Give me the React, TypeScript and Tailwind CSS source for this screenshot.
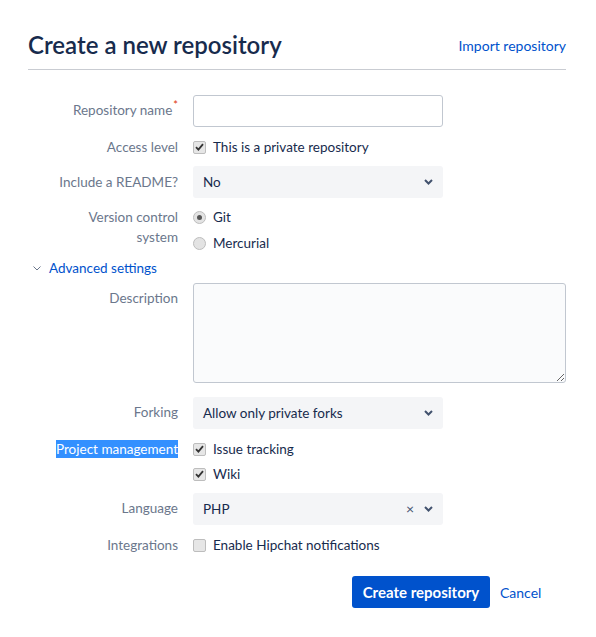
import React from "react";

const FONT = "font-['Lato','Liberation_Sans',sans-serif]";

function Check({ checked }: { checked: boolean }) {
  return (
    <span className="flex h-[13px] w-[13px] shrink-0 items-center justify-center rounded-[2px] border border-[#bdbdbd] bg-[#e6e6e6]">
      {checked && (
        <svg width="9" height="8" viewBox="0 0 9 8">
          <path d="M1 4.2 L3.4 6.6 L8 1.2" fill="none" stroke="#333" strokeWidth="1.8" />
        </svg>
      )}
    </span>
  );
}

function Radio({ checked }: { checked: boolean }) {
  return (
    <span className="flex h-[13px] w-[13px] shrink-0 items-center justify-center rounded-full border border-[#bdbdbd] bg-[#e3e3e3]">
      {checked && <span className="h-[5px] w-[5px] rounded-full bg-[#555]" />}
    </span>
  );
}

function Chevron() {
  return (
    <svg width="9" height="6" viewBox="0 0 9 6">
      <path d="M1 1 L4.5 4.5 L8 1" fill="none" stroke="#42526e" strokeWidth="2" />
    </svg>
  );
}

function Row({ label, children, className = "", labelClass = "" }: { label: React.ReactNode; children: React.ReactNode; className?: string; labelClass?: string }) {
  return (
    <div className={`flex ${className}`}>
      <div className={`w-[150px] shrink-0 text-right text-[13.5px] leading-[20px] text-[#6b778c] ${labelClass}`}>{label}</div>
      <div className="ml-[15px] flex-1">{children}</div>
    </div>
  );
}

function Select({ value, clear }: { value: string; clear?: boolean }) {
  return (
    <div className="flex h-[32px] w-[250px] items-center rounded-[3px] bg-[#f4f5f7] pl-[10px] pr-[10px] text-[13.5px] text-[#172b4d]">
      <span className="flex-1">{value}</span>
      {clear && <span className="mr-[10px] text-[14px] leading-none text-[#42526e]">×</span>}
      <Chevron />
    </div>
  );
}

function Option({ control, text }: { control: React.ReactNode; text: string }) {
  return (
    <div className="flex h-[20px] items-center gap-[7px] text-[13.5px] text-[#172b4d]">
      {control}
      <span>{text}</span>
    </div>
  );
}

export default function App() {
  return (
    <div className={`min-h-screen bg-white px-[30px] pl-[28px] pt-[29px] ${FONT}`}>
      <div className="flex h-[32px] items-center justify-between">
        <h1 className="text-[24px] font-semibold text-[#172b4d]">Create a new repository</h1>
        <a className="text-[14px] text-[#0052cc]">Import repository</a>
      </div>
      <div className="mt-[8px] border-b border-[#c9ccd2]" />

      <Row
        label={
          <>
            Repository name
            <span className="relative -top-[6px] ml-[1px] text-[11px] leading-none text-[#de350b]">*</span>
          </>
        }
        className="mt-[25px]"
        labelClass="pt-[5px]"
      >
        <div className="h-[32px] w-[250px] rounded-[3px] border border-[#c1c7d0] bg-white" />
      </Row>

      <Row label="Access level" className="mt-[10px]">
        <Option control={<Check checked />} text="This is a private repository" />
      </Row>

      <Row label="Include a README?" className="mt-[9px]" labelClass="pt-[6px]">
        <Select value="No" />
      </Row>

      <Row label={<>Version control<br />system</>} className="mt-[9px]">
        <div className="flex flex-col gap-[6px]">
          <Option control={<Radio checked />} text="Git" />
          <Option control={<Radio checked={false} />} text="Mercurial" />
        </div>
      </Row>

      <div className="mt-[5px] flex h-[20px] items-center pl-[5px] text-[13.5px] text-[#0052cc]">
        <svg width="8" height="5" viewBox="0 0 8 5" className="mr-[8px]">
          <path d="M0.5 0.5 L4 4 L7.5 0.5" fill="none" stroke="#6b778c" strokeWidth="1" />
        </svg>
        Advanced settings
      </div>

      <Row label="Description" className="mt-[5px]" labelClass="pt-[5px]">
        <textarea className="block h-[100px] w-full rounded-[3px] border border-[#c1c7d0] bg-[#fafbfc]" />
      </Row>

      <Row label="Forking" className="mt-[14px]" labelClass="pt-[5px]">
        <Select value="Allow only private forks" />
      </Row>

      <Row
        label={<span className="bg-[#3390ff] py-[1px] text-white">Project management</span>}
        className="mt-[10px]"
      >
        <div className="flex flex-col gap-[5px]">
          <Option control={<Check checked />} text="Issue tracking" />
          <Option control={<Check checked />} text="Wiki" />
        </div>
      </Row>

      <Row label="Language" className="mt-[9px]" labelClass="pt-[5px]">
        <Select value="PHP" clear />
      </Row>

      <Row label="Integrations" className="mt-[10px]">
        <Option control={<Check checked={false} />} text="Enable Hipchat notifications" />
      </Row>

      <div className="mt-[21px] flex items-center pl-[324px]">
        <button className="h-[32px] w-[138px] rounded-[3px] bg-[#0052cc] text-[15px] font-bold text-white">Create repository</button>
        <a className="ml-[10px] text-[14px] text-[#0052cc]">Cancel</a>
      </div>
    </div>
  );
}
